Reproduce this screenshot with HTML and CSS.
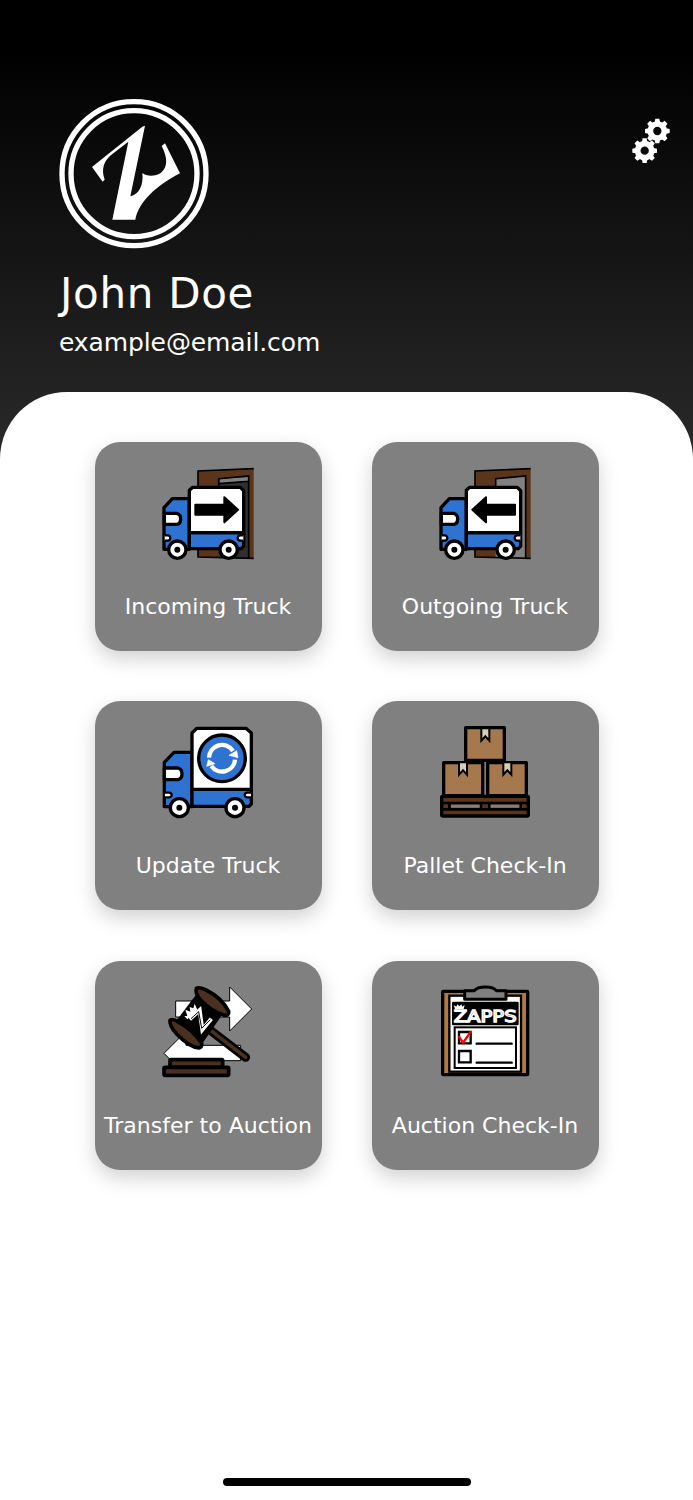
FILE: index.html
```
<!DOCTYPE html>
<html lang="en">
<head>
  <meta charset="UTF-8" />
  <meta name="viewport" content="width=device-width, initial-scale=1.0"/>
  <title>Home</title>
  <link rel="stylesheet" href="styles.css">
</head>
<body>
  <header class="header">
    <div class="profile">
      <svg class="logo" viewBox="27 27 450 450">
        <g fill="none" stroke="#fff" stroke-width="16">
          <circle cx="252" cy="251" r="216"/>
          <circle cx="252" cy="251" r="189"/>
        </g>
        <path fill="#fff" d="M285 107L277 110L126 231L158 275L164 269C153 239 160 211 190 190L235 155L187 389H256C266 335 320 286 390 250L345 160L335 168C353 202 354 231 333 248C318 259 292 261 277 249C281 284 268 313 241 319Z"/>
      </svg>
      <div class="name">John Doe</div>
      <div class="email">example@email.com</div>
    </div>
    <svg class="settings" viewBox="36 39 114 135">
      <defs>
        <g id="gear">
          <circle r="21" fill="none" stroke="#fff" stroke-width="17"/>
          <g fill="#fff">
            <path id="teeth" d="M-8 -27L-6 -37H6L8 -27ZM-8 27L-6 37H6L8 27ZM-27 -8L-37 -6V6L-27 8ZM27 -8L37 -6V6L27 8Z"/>
            <use href="#teeth" transform="rotate(45)"/>
          </g>
        </g>
      </defs>
      <use href="#gear" transform="translate(112 78)"/>
      <use href="#gear" transform="translate(74 137)"/>
    </svg>
  </header>

  <main class="panel">
    <div class="grid">
      <a class="card">
        <svg class="icon" viewBox="36 36 276 276">
          <path d="M144 48L311 40V311L144 306Z" fill="#5b351b"/>
          <path d="M206 71L297 63V310H206Z" fill="#303030"/>
          <path d="M209 72L294 66V80L209 86Z" fill="#808080"/>
          <path d="M311 41L144 48V306L311 310M206 100V71L296 63V309M206 86L296 79" fill="none" stroke="#000" stroke-width="5"/>
          <g id="truck" stroke="#000" stroke-width="10" stroke-linejoin="round">
            <path d="M118 131H67L42 158V283H118Z" fill="#2e72d2"/>
            <path d="M118 233H281V274L273 281H118Z" fill="#2e72d2"/>
            <path d="M118 233V106L128 97H271L281 107V233Z" fill="#fff"/>
            <path d="M43 175H80Q92 178 92 191Q92 206 81 208H43Z" fill="#fff"/>
            <path d="M44 241H55Q61 243 61 248Q61 255 55 257H44M280 241H269Q263 243 263 248Q263 255 269 257H280" fill="#fff" stroke-width="7"/>
            <circle cx="82" cy="284" r="26" fill="#fff"/>
            <circle cx="236" cy="284" r="26" fill="#fff"/>
            <circle cx="82" cy="284" r="4"/>
            <circle cx="236" cy="284" r="4"/>
          </g>
          <path d="M136 149H223V127L264 164L223 202V179H136Z" stroke="#000" stroke-width="6" stroke-linejoin="round"/>
        </svg>
        <span class="label">Incoming Truck</span>
      </a>

      <a class="card">
        <svg class="icon" viewBox="36 36 276 276">
          <path d="M144 48L311 40V311L144 306Z" fill="#5b351b"/>
          <path d="M206 71L297 63V310H206Z" fill="#808080"/>
          <path d="M311 41L144 48V306L311 310M206 100V71L296 63V309" fill="none" stroke="#000" stroke-width="5"/>
          <use href="#truck"/>
          <path d="M264 149H177V127L136 164L177 202V179H264Z" stroke="#000" stroke-width="6" stroke-linejoin="round"/>
        </svg>
        <span class="label">Outgoing Truck</span>
      </a>

      <a class="card">
        <svg class="icon" viewBox="36 36 276 276">
          <g stroke="#000" stroke-width="10" stroke-linejoin="round">
            <path d="M126 115H72L43 145V278H126Z" fill="#2e72d2"/>
            <path d="M126 226H304V270L297 277H126Z" fill="#2e72d2"/>
            <path d="M126 226V57L140 43H288L304 57V226Z" fill="#fff"/>
            <path d="M43 162H84Q96 165 96 180Q96 194 84 197H43Z" fill="#fff"/>
            <path d="M45 236H58Q65 238 65 243Q65 248 58 250H45M303 236H290Q284 238 284 243Q284 248 290 250H303" fill="#fff" stroke-width="7"/>
            <circle cx="88" cy="281" r="27" fill="#fff"/>
            <circle cx="255" cy="281" r="27" fill="#fff"/>
            <circle cx="88" cy="281" r="4"/>
            <circle cx="255" cy="281" r="4"/>
            <circle cx="216" cy="133" r="70" fill="#2e72d2"/>
          </g>
          <path d="M177 131A39 39 0 0 1 249 111M255 137A39 39 0 0 1 184 156" fill="none" stroke="#fff" stroke-width="13"/>
          <path d="M237 124L260 110L264 131ZM170 157L175 137L195 149Z" fill="#fff" stroke="#fff" stroke-width="2"/>
        </svg>
        <span class="label">Update Truck</span>
      </a>

      <a class="card">
        <svg class="icon" viewBox="36 36 276 276">
          <g fill="#a6784e" stroke="#000" stroke-width="10" stroke-linejoin="round">
            <rect x="116" y="41" width="116" height="98"/>
            <rect x="50" y="146" width="117" height="99"/>
            <rect x="182" y="146" width="116" height="99"/>
          </g>
          <g fill="#d8cfb0" stroke="#000" stroke-width="6">
            <path id="tape" d="M163 43H187V80L175 67L163 80Z"/>
            <use href="#tape" x="-67" y="102"/>
            <use href="#tape" x="66" y="102"/>
          </g>
          <rect x="44" y="247" width="260" height="59" rx="2" fill="#5b351b" stroke="#000" stroke-width="10"/>
          <path d="M46 267H302M46 286H302M67 267V286M162 267V286M187 267V286M281 267V286" stroke="#000" stroke-width="8"/>
          <path d="M72 272H158V281H72ZM191 272H277V281H191Z" fill="#808080"/>
        </svg>
        <span class="label">Pallet Check-In</span>
      </a>

      <a class="card">
        <svg class="icon" viewBox="36 36 276 276">
          <path d="M77 81H239V39L305 105L239 171V129H77ZM272 214H108V172L42 238L64 260H272Z" fill="#fff" stroke="#000" stroke-width="3"/>
          <path d="M180 168L287 250" stroke="#000" stroke-width="27" stroke-linecap="round"/>
          <path d="M183 170L287 250" stroke="#4a3020" stroke-width="11" stroke-linecap="round"/>
          <path d="M138 62L80 139L158 207L214 126Z"/>
          <g fill="#4a3020" stroke="#000" stroke-width="11" stroke-linejoin="round">
            <path d="M139 43Q147 38 168 48Q215 71 236 112Q238 126 222 124Q184 111 151 77Q135 59 139 43Z"/>
            <path d="M60 139Q68 134 80 141Q126 164 155 208Q157 219 147 222Q117 219 80 180Q58 156 60 139Z"/>
            <rect x="60" y="257" width="158" height="23" rx="3"/>
            <rect x="42" y="280" width="194" height="24" rx="3"/>
          </g>
          <!-- crown and monogram on the gavel head -->
          <g fill="none">
            <path d="M119 136L149 108L157 167L184 134" stroke="#fff" stroke-width="12"/>
            <path d="M123 134L146 113L155 163L181 137" stroke="#000" stroke-width="3"/>
            <path d="M112 136L103 126L112 126L106 107L121 113L119 99L130 103L134 89L142 107Z" fill="#fff"/>
          </g>
        </svg>
        <span class="label">Transfer to Auction</span>
      </a>

      <a class="card">
        <svg class="icon" viewBox="36 36 276 276">
          <rect x="47" y="52" width="255" height="250" rx="2" fill="#b17b40" stroke="#000" stroke-width="10"/>
          <rect x="67" y="65" width="215" height="228" fill="#fff" stroke="#000" stroke-width="7"/>
          <path d="M113 50H142Q150 39 175 39Q200 39 208 50H237V76H113Z" fill="#808080" stroke="#000" stroke-width="9" stroke-linejoin="round"/>
          <rect x="75" y="83" width="200" height="71" rx="4"/>
          <text class="brand" x="80" y="143" textLength="189" lengthAdjust="spacingAndGlyphs">ZAPPS</text>
          <path d="M84 105L80 93L88 98L91 91L97 97L103 91L106 98L113 93L110 105Z" fill="#fff"/>
          <rect x="83" y="160" width="184" height="122" fill="none" stroke="#000" stroke-width="6"/>
          <path d="M96 174H131V208H96ZM96 231H131V265H96ZM149 209H254M149 266H254" fill="none" stroke="#000" stroke-width="7" stroke-linecap="round"/>
          <path d="M96 188L108 206L131 174" fill="none" stroke="#f00" stroke-width="7" stroke-linecap="round"/>
        </svg>
        <span class="label">Auction Check-In</span>
      </a>
    </div>
    <div class="home-bar"></div>
  </main>
</body>
</html>
```
FILE: styles.css
```
* { box-sizing: border-box; }
body {
  margin: 0;
  min-height: 1500px;
  display: flex;
  flex-direction: column;
  font-family: "DejaVu Sans", Verdana, sans-serif;
  color: white;
  background: linear-gradient(#000 0, #000 50px, #2a2a2a 460px);
}

.header {
  height: 392px;
  padding: 99px 23px 0 59px;
  display: flex;
  justify-content: space-between;
  align-items: flex-start;
}
.logo { display: block; width: 150px; height: 150px; }
.settings { width: 38px; height: 45px; margin-top: 19px; }
.name { margin-top: 20px; padding-left: 1px; font-size: 42px; line-height: 50px; letter-spacing: 0.7px; }
.email { margin-top: 9px; font-size: 25px; line-height: 30px; letter-spacing: -0.1px; }

.panel {
  flex: 1;
  display: flex;
  flex-direction: column;
  align-items: center;
  justify-content: space-between;
  padding: 50px 0 14px;
  background: white;
  border-radius: 67px 67px 0 0;
}
.grid { display: grid; grid-template-columns: 227px 227px; gap: 50.4px 50px; }
.card {
  height: 209px;
  padding-top: 25px;
  display: flex;
  flex-direction: column;
  align-items: center;
  background: #808080;
  border-radius: 25px;
  box-shadow: 0 8px 20px rgba(0,0,0,0.18);
}
.icon { width: 92px; height: 92px; overflow: visible; }
.label { margin-top: 34px; font-size: 22px; line-height: 28px; white-space: nowrap; }
.brand { font-size: 46px; fill: #000; stroke: #fff; stroke-width: 4px; }

.home-bar { width: 248px; height: 8px; background: black; border-radius: 4px; }
```
